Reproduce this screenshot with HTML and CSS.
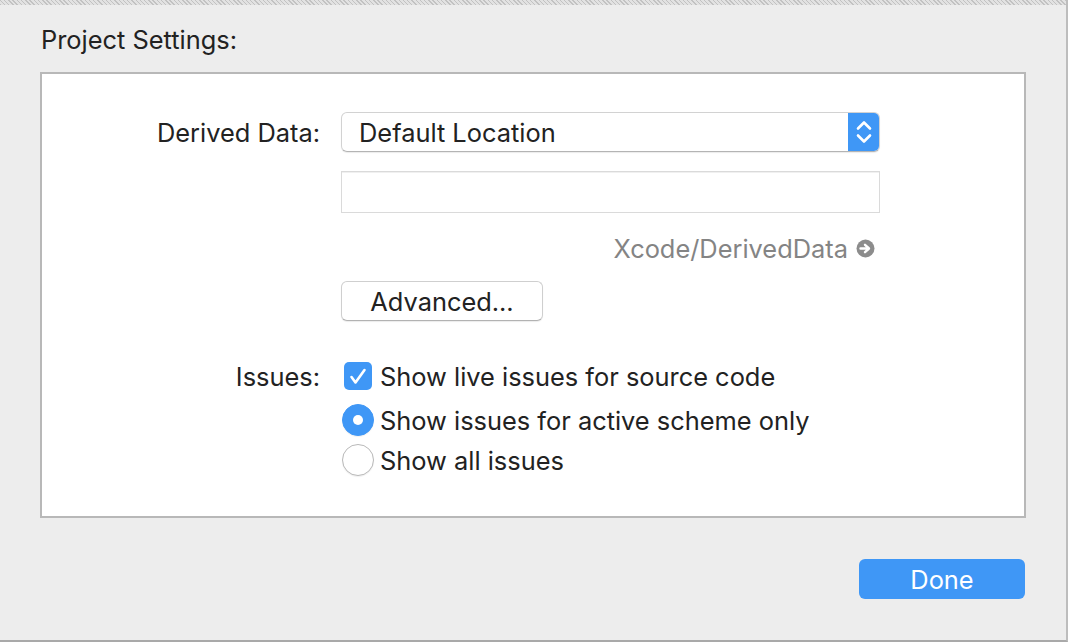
FILE: index.html
```html
<!DOCTYPE html>
<html>
<head>
<meta charset="utf-8">
<link rel="stylesheet" href="styles.css">
</head>
<body>
<div class="window">
  <div class="hatch"></div>
  <div class="content">
    <h1 class="section-title">Project Settings:</h1>
    <div class="panel">
      <div class="form">
        <div class="label">Derived Data:</div>
        <div class="popup">
          <span class="popup-text">Default Location</span>
          <span class="stepper">
            <svg width="32" height="40" viewBox="0 0 32 40"><path d="M10 16.5 L16 10.5 L22 16.5 M10 23.5 L16 29.5 L22 23.5" fill="none" stroke="#fff" stroke-width="2.6" stroke-linecap="round" stroke-linejoin="round"/></svg>
          </span>
        </div>

        <div class="label"></div>
        <div class="field"></div>

        <div class="label"></div>
        <div class="path">
          <span class="path-text">Xcode/DerivedData</span>
          <svg class="path-arrow" width="19" height="19" viewBox="0 0 19 19"><circle cx="9.5" cy="9.5" r="9" fill="#8c8c8c"/><path d="M4.5 9.5 H12 M9 5.8 L13 9.5 L9 13.2" fill="none" stroke="#fff" stroke-width="2.4" stroke-linecap="round" stroke-linejoin="round"/></svg>
        </div>

        <div class="label"></div>
        <div class="adv-row"><button class="btn">Advanced...</button></div>

        <div class="label issues">Issues:</div>
        <div class="option check-row">
          <span class="checkbox"><svg width="28" height="28" viewBox="0 0 28 28"><path d="M7.5 15 L11.5 20.5 L20.5 8" fill="none" stroke="#fff" stroke-width="2.6" stroke-linecap="round" stroke-linejoin="round"/></svg></span>
          <span class="opt-text">Show live issues for source code</span>
        </div>

        <div class="label"></div>
        <div class="option radio-row first">
          <span class="radio on"><span class="dot"></span></span>
          <span class="opt-text">Show issues for active scheme only</span>
        </div>

        <div class="label"></div>
        <div class="option radio-row second">
          <span class="radio"></span>
          <span class="opt-text">Show all issues</span>
        </div>
      </div>
    </div>
    <div class="footer">
      <button class="primary">Done</button>
    </div>
  </div>
</div>
</body>
</html>
```

FILE: styles.css
```css
html, body {
  margin: 0;
  padding: 0;
  background: #ededed;
}

body {
  font-family: "Inter", "Liberation Sans", sans-serif;
  color: #222;
  width: 1068px;
  height: 642px;
  overflow: hidden;
}

.window {
  width: 1066px;
  height: 640px;
  border-right: 2px solid #bdbdbd;
  border-bottom: 2px solid #a9a9a9;
  display: flex;
  flex-direction: column;
}

.hatch {
  height: 5px;
  background-color: #e2e2e2;
  background-image: repeating-linear-gradient(45deg, #c2c2c2 0 1px, transparent 1px 3px);
}

.content {
  padding-left: 40px;
  display: flex;
  flex-direction: column;
}

.section-title {
  margin: 20px 0 0 1px;
  font-size: 25.4px;
  font-weight: 400;
  line-height: 30px;
  height: 47px;
  color: #222;
}

.panel {
  width: 982px;
  height: 442px;
  border: 2px solid #b8b8b8;
  background: #fff;
}

.form {
  display: grid;
  grid-template-columns: 278px 539px;
  column-gap: 21px;
  align-items: center;
  padding-top: 38px;
}

.label {
  text-align: right;
  font-size: 25.4px;
  line-height: 30px;
  padding-top: 2px;
  color: #222;
}

.popup {
  position: relative;
  height: 38px;
  border: 1px solid #d2d2d2;
  border-bottom-color: #b4b4b4;
  border-radius: 6px;
  box-shadow: 0 1px 1px rgba(0, 0, 0, 0.08);
  display: flex;
  align-items: center;
  overflow: hidden;
}

.popup-text {
  flex: 1;
  padding-left: 17px;
  padding-top: 1px;
  font-size: 25.4px;
  line-height: 30px;
}

.stepper {
  width: 32px;
  height: 40px;
  margin: -1px -1px -1px 0;
  background: #3f97f6;
  border-radius: 0 6px 6px 0;
  display: flex;
}

.field {
  margin-top: 19px;
  height: 40px;
  border: 1px solid #dadada;
  box-shadow: inset 0 1px 0 #f0f0f0;
}

.path {
  margin-top: 23px;
  height: 24px;
  display: flex;
  align-items: center;
  justify-content: flex-end;
  gap: 8px;
  padding-right: 5px;
}

.path-text {
  font-size: 25.4px;
  line-height: 24px;
  padding-top: 2px;
  color: #848484;
}

.path-arrow {
  flex: none;
}

.adv-row {
  margin-top: 21px;
  display: flex;
}

.btn {
  width: 202px;
  height: 40px;
  background: #fff;
  border: 1px solid #cfcfcf;
  border-bottom-color: #b2b2b2;
  border-radius: 6px;
  box-shadow: 0 1px 1px rgba(0, 0, 0, 0.08);
  font-family: inherit;
  font-size: 25.4px;
  color: #222;
  padding: 0;
}

.issues {
  margin-top: 39px;
}

.option {
  display: flex;
  align-items: center;
  height: 32px;
}

.check-row {
  margin-top: 39px;
  padding-left: 3px;
  gap: 8px;
}

.radio-row.first {
  margin-top: 12px;
  padding-left: 1px;
  gap: 6px;
}

.radio-row.second {
  margin-top: 8px;
  padding-left: 1px;
  gap: 6px;
}

.opt-text {
  font-size: 25.4px;
  line-height: 30px;
  padding-top: 2px;
  color: #222;
}

.checkbox {
  width: 28px;
  height: 28px;
  border-radius: 5px;
  background: #3f97f6;
  display: flex;
  flex: none;
}

.radio {
  width: 30px;
  height: 30px;
  border-radius: 50%;
  border: 1px solid #b9b9b9;
  background: #fff;
  display: flex;
  align-items: center;
  justify-content: center;
  flex: none;
  box-shadow: 0 1px 1px rgba(0, 0, 0, 0.06);
}

.radio.on {
  border-color: #3f97f6;
  background: #3f97f6;
}

.radio .dot {
  width: 10px;
  height: 10px;
  border-radius: 50%;
  background: #fff;
}

.footer {
  width: 986px;
  display: flex;
  justify-content: flex-end;
  margin-top: 41px;
}

.primary {
  margin-right: 1px;
  width: 166px;
  height: 40px;
  border: none;
  border-radius: 6px;
  background: #3f97f6;
  color: #fff;
  font-family: inherit;
  font-size: 25.4px;
  padding: 0;
}
```
